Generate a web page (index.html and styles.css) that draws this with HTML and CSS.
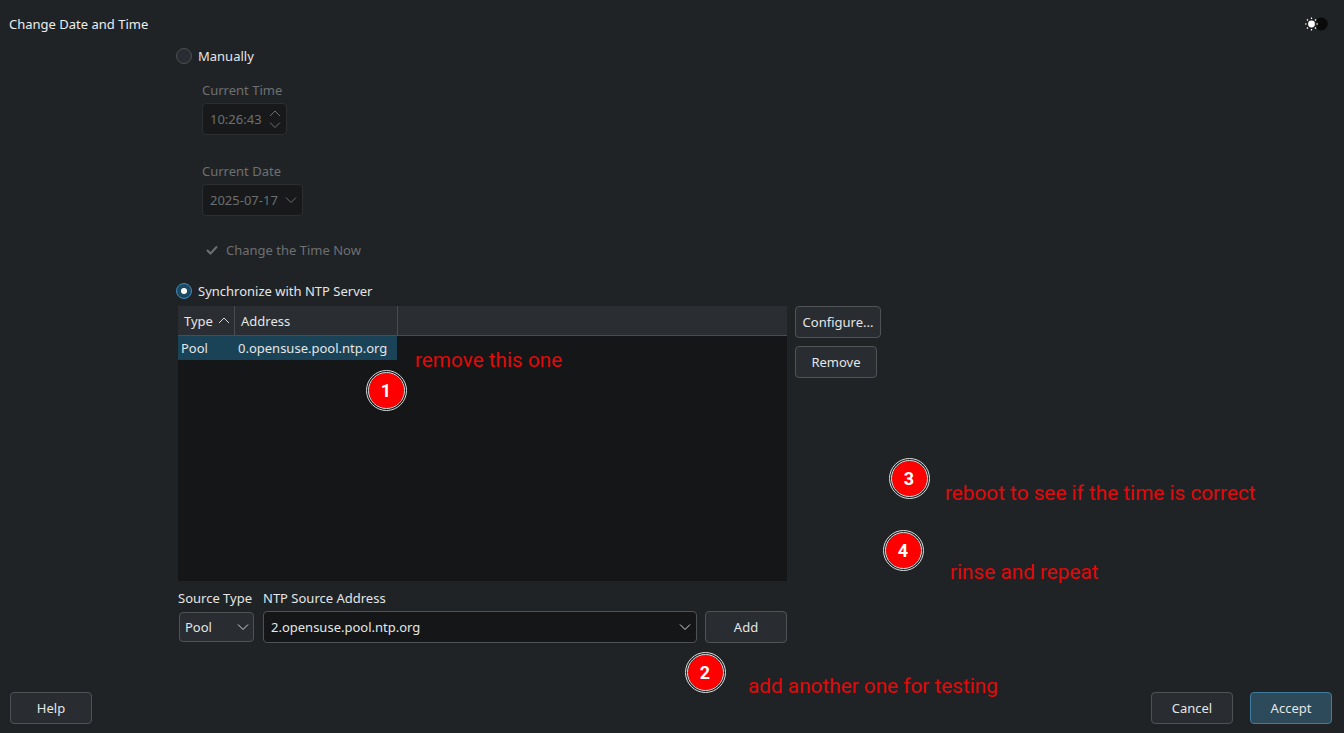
FILE: index.html
```html
<!DOCTYPE html>
<html lang="en">
<head>
<meta charset="utf-8">
<title>Change Date and Time</title>
<link rel="stylesheet" href="styles.css">
</head>
<body>
<div class="app">
  <header class="titlebar">
    <span class="title">Change Date and Time</span>
    <svg class="theme" width="26" height="16" viewBox="0 0 26 16">
      <circle cx="17.2" cy="8" r="6.5" fill="#0a0a0a"/>
      <circle cx="8.5" cy="8" r="5" fill="#202326"/>
      <circle cx="7.5" cy="8" r="3.4" fill="#fff"/>
      <g stroke="#fff" stroke-width="1.2">
        <path d="M7.5 1.5v1.6M7.5 12.9v1.6M1 8h1.6M12.4 8H14M2.9 3.4l1.1 1.1M11 11.5l1.1 1.1M2.9 12.6l1.1-1.1M11 4.5l1.1-1.1"/>
      </g>
    </svg>
  </header>
  <main class="form">
    <div class="radio-row">
      <span class="radio"></span><span>Manually</span>
    </div>
    <section class="manual">
      <label class="dim">Current Time</label>
      <div class="field spin dim">
        <span>10:26:43</span>
        <svg width="12" height="22" viewBox="0 0 12 22" fill="none" stroke="#6d7072" stroke-width="1"><path d="M1 8l5-5 5 5M1 14.5l5 5 5-5"/></svg>
      </div>
      <label class="dim date-label">Current Date</label>
      <div class="field date dim">
        <span>2025-07-17</span>
        <svg width="12" height="8" viewBox="0 0 12 8" fill="none" stroke="#6d7072" stroke-width="1"><path d="M1 1.5l5 5 5-5"/></svg>
      </div>
      <div class="now dim">
        <svg width="12" height="10" viewBox="0 0 12 10" fill="none" stroke="#6d7072" stroke-width="2"><path d="M1 5l3.5 3.5L11 1.5"/></svg>
        <span>Change the Time Now</span>
      </div>
    </section>
    <div class="radio-row sync">
      <span class="radio on"></span><span>Synchronize with NTP Server</span>
    </div>
    <div class="table-row">
      <div class="table">
        <div class="thead">
          <div class="th th-type">Type
            <svg width="12" height="7" viewBox="0 0 12 7" fill="none" stroke="#d5d7d8" stroke-width="1"><path d="M1 6l5-5 5 5"/></svg>
          </div>
          <div class="th th-addr">Address</div>
        </div>
        <div class="tr">
          <span class="td-type">Pool</span>
          <span class="td-addr">0.opensuse.pool.ntp.org</span>
        </div>
      </div>
      <div class="side">
        <button class="btn configure">Configure...</button>
        <button class="btn remove">Remove</button>
      </div>
    </div>
    <div class="source">
      <div class="col col-type">
        <label>Source Type</label>
        <div class="field pool">
          <span>Pool</span>
          <svg width="12" height="8" viewBox="0 0 12 8" fill="none" stroke="#d5d7d8" stroke-width="1"><path d="M1 1.5l5 5 5-5"/></svg>
        </div>
      </div>
      <div class="col col-addr">
        <label>NTP Source Address</label>
        <div class="addr-row">
          <div class="field addr">
            <span>2.opensuse.pool.ntp.org</span>
            <svg width="12" height="8" viewBox="0 0 12 8" fill="none" stroke="#d5d7d8" stroke-width="1"><path d="M1 1.5l5 5 5-5"/></svg>
          </div>
          <button class="btn add">Add</button>
        </div>
      </div>
    </div>
  </main>
  <footer class="footer">
    <button class="btn foot">Help</button>
    <div class="foot-right">
      <button class="btn foot">Cancel</button>
      <button class="btn foot accept">Accept</button>
    </div>
  </footer>
</div>
<div class="note n1">remove this one</div>
<div class="note n2">add another one for testing</div>
<div class="note n3">reboot to see if the time is correct</div>
<div class="note n4">rinse and repeat</div>
<div class="badge b1">1</div>
<div class="badge b2">2</div>
<div class="badge b3">3</div>
<div class="badge b4">4</div>
</body>
</html>
```
FILE: styles.css
```css
* { box-sizing: border-box; }
html, body { margin: 0; padding: 0; height: 733px; overflow: hidden; }
body {
  background: #202326;
  color: #e4e6e7;
  font-family: "Noto Sans", sans-serif;
  font-size: 13px;
  line-height: 18px;
  position: relative;
}
.app { display: flex; flex-direction: column; width: 1344px; height: 733px; }
.titlebar {
  display: flex;
  justify-content: space-between;
  align-items: center;
  height: 47px;
  padding: 1px 9px 0;
  flex: none;
}
.title { color: #eceeef; }
.theme { margin-right: 5px; margin-top: -1px; }
.form { flex: 1; padding-left: 176px; width: 900px; }
.radio-row { display: flex; align-items: center; gap: 6px; height: 18px; }
.radio {
  width: 16px; height: 16px;
  border-radius: 50%;
  border: 1px solid #4f5255;
  background: #292c30;
  position: relative;
}
.radio.on { border-color: #3f8dbd; background: #1d4a63; }
.radio.on::after {
  content: "";
  position: absolute;
  left: 4px; top: 4px;
  width: 6px; height: 6px;
  border-radius: 50%;
  background: #fff;
}
.dim { color: #6d7072; }
.manual { padding-left: 26px; padding-top: 16px; display: flex; flex-direction: column; align-items: flex-start; }
.manual label { height: 18px; }
.field {
  display: flex;
  align-items: center;
  justify-content: space-between;
  background: #141618;
  border: 1px solid #3c3f42;
  border-radius: 4px;
}
.field.dim { background: #17191b; border-color: #2c2f32; }
.spin { width: 85px; height: 32px; padding: 0 5px 0 7px; margin-top: 4px; }
.date-label { margin-top: 27px; }
.date { width: 101px; height: 32px; padding: 0 5px 0 7px; margin-top: 4px; }
.now { display: flex; align-items: center; gap: 8px; margin-top: 25px; padding-left: 4px; height: 18px; }
.sync { margin-top: 23px; }
.table-row { display: flex; margin-top: 6px; padding-left: 2px; gap: 8px; }
.table { width: 609px; height: 275px; background: #141618; }
.thead {
  display: flex;
  height: 30px;
  background: #2a2d31;
  border-bottom: 1px solid #4a4d50;
}
.th { display: flex; align-items: center; border-right: 1px solid #4a4d50; padding-left: 6px; gap: 5px; }
.th-type { width: 57px; }
.th-addr { width: 163px; }
.tr { display: flex; align-items: center; width: 219px; height: 24px; background: #1a4358; }
.td-type { width: 60px; padding-left: 3px; }
.side { display: flex; flex-direction: column; align-items: flex-start; gap: 8px; }
.btn {
  font: inherit;
  color: #e4e6e7;
  background: #292c30;
  border: 1px solid #505356;
  border-radius: 4px;
  height: 32px;
  padding: 0;
}
.configure { width: 86px; }
.remove { width: 82px; }
.source { display: flex; gap: 9px; margin-top: 8px; padding-left: 2px; }
.col { display: flex; flex-direction: column; }
.col label { height: 18px; }
.pool { width: 75px; height: 30px; margin: 5px 0 0 1px; padding: 0 4px 0 5px; background: #292c30; border-color: #505356; }
.addr-row { display: flex; gap: 8px; margin-top: 4px; }
.addr { width: 434px; height: 32px; padding: 0 5px 0 7px; border-color: #505356; }
.add { width: 82px; }
.footer {
  display: flex;
  justify-content: space-between;
  padding: 0 12px 9px 10px;
  flex: none;
}
.foot { width: 82px; }
.foot-right { display: flex; gap: 17px; }
.accept { background: #2d4a5a; border-color: #3f7c9f; }
.note {
  position: absolute;
  font-family: Roboto, sans-serif;
  font-size: 20.75px;
  line-height: 24px;
  color: #e00a0a;
  white-space: nowrap;
}
.n1 { left: 415px; top: 348px; }
.n2 { left: 748px; top: 674px; }
.n3 { left: 945px; top: 481px; }
.n4 { left: 950px; top: 560px; }
.badge {
  position: absolute;
  width: 41px; height: 41px;
  border-radius: 50%;
  background: #ff0000;
  border: 3px double #dcdcdc;
  background-clip: padding-box;
  color: #fff;
  font-family: Roboto, sans-serif;
  font-weight: 700;
  font-size: 18px;
  display: flex;
  align-items: center;
  justify-content: center;
}
.b1 { left: 365.5px; top: 370px; }
.b2 { left: 684.5px; top: 652px; }
.b3 { left: 888.5px; top: 458px; }
.b4 { left: 882.5px; top: 530px; }
```
